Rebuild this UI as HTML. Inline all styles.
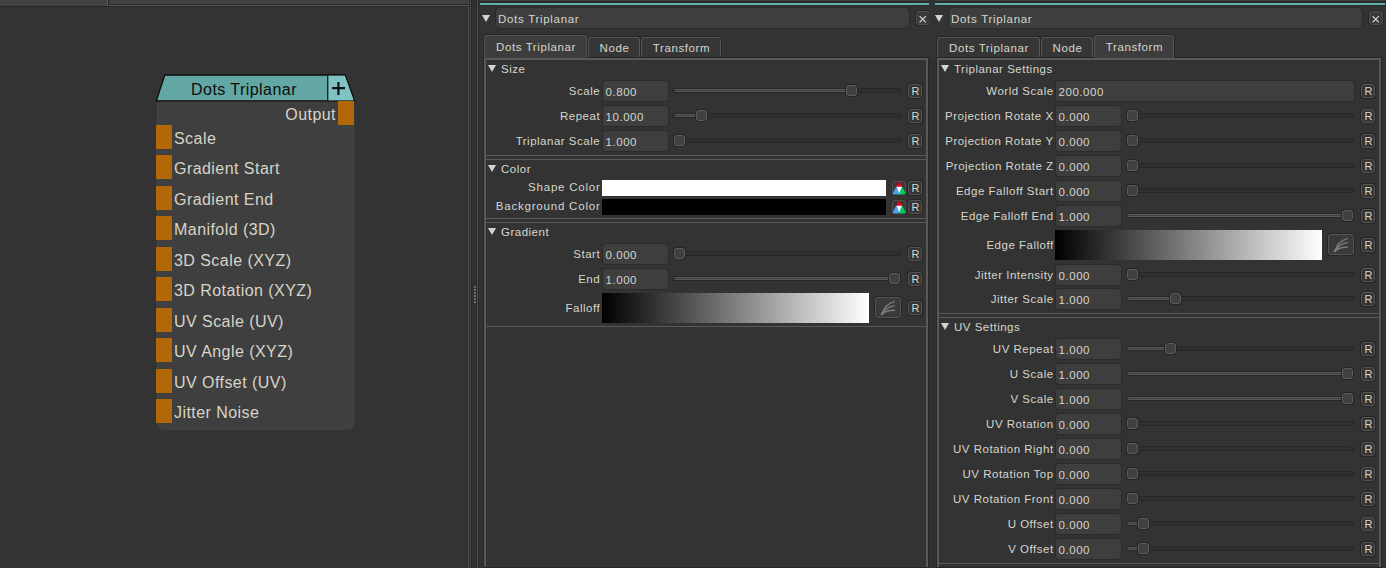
<!DOCTYPE html><html><head><meta charset="utf-8"><style>
*{margin:0;padding:0;box-sizing:border-box}
html,body{width:1386px;height:568px;overflow:hidden;background:#333333}
body{position:relative;font-family:"Liberation Sans",sans-serif}
body>div{position:absolute}
.t{position:absolute;font-size:11.5px;line-height:14px;color:#d6d6cc;white-space:nowrap;letter-spacing:0.5px}
.nt{position:absolute;font-size:16px;line-height:18px;white-space:nowrap;letter-spacing:0.45px}
.tri{width:0;height:0;border-left:4px solid transparent;border-right:4px solid transparent;border-top:7px solid #d4d4d4}
.tbox{background:#3e3e3e;border-radius:4px;box-shadow:0 0 0 1px #2a2a2a}
.xbtn{width:14px;height:14px;background:#3a3a3a;border:1px solid #4f4f4f;border-radius:3px;box-shadow:0 0 0 1px #262626}
.xbtn span{position:absolute;left:2px;top:0px;font-size:13px;line-height:14px;color:#d6d6cc}
.tab{background:#363636;border:1px solid #555555;border-bottom:none;border-radius:3px 3px 0 0;box-shadow:0 0 0 1px #262626}
.tab.act{background:#3d3d3d}
.inp{background:#3e3e3e;border-radius:3px;box-shadow:0 0 0 1px #2b2b2b}
.trk{background:#2f2f2f;border-radius:2px;box-shadow:0 0 0 1px #272727}
.trkf{background:#3d3d3d;border:1px solid #5a5a5a;border-radius:2px;box-shadow:0 0 0 1px #262626}
.hdl{background:#404040;border:1px solid #5c5c5c;border-radius:3px;box-shadow:0 0 0 1px #262626}
.rb{width:14px;height:14px;background:#353535;border:1px solid #555;border-radius:3px;box-shadow:0 0 0 1px #262626}
.rb span{position:absolute;left:2.5px;top:0.3px;font-size:11px;line-height:12px;color:#d6d6cc}
.fb{background:#3a3a3a;border:1px solid #555555;border-radius:3px;box-shadow:0 0 0 1px #262626}
.cb{width:14px;height:14px;background:#3a3a3a;border:1px solid #4f4f4f;border-radius:3px}
</style></head><body>
<div style="left:0px;top:0px;width:107px;height:6px;background:#424242;"></div>
<div style="left:107px;top:0px;width:1px;height:6px;background:#5a5a5a;"></div>
<div style="left:108px;top:0px;width:1px;height:5px;background:#262626;"></div>
<div style="left:109px;top:0px;width:360px;height:4px;background:#424242;"></div>
<div style="left:108px;top:4px;width:362px;height:1px;background:#262626;"></div>
<div style="left:109px;top:5px;width:360px;height:1px;background:#585858;"></div>
<div style="left:0px;top:6px;width:468px;height:1px;background:#272727;"></div>
<div style="left:468px;top:5px;width:1px;height:563px;background:#555555;"></div>
<div style="left:467px;top:6px;width:1px;height:562px;background:#2a2a2a;"></div>
<div style="left:469px;top:4px;width:1px;height:564px;background:#282828;"></div>
<div style="left:470px;top:0px;width:1px;height:568px;background:#4a4a4a;"></div>
<div style="left:471px;top:0px;width:1px;height:568px;background:#262626;"></div>
<div style="left:472px;top:0px;width:4px;height:568px;background:#313131;"></div>
<div style="left:476px;top:0px;width:1px;height:568px;background:#282828;"></div>
<div style="left:477px;top:0px;width:1px;height:568px;background:#505050;"></div>
<div style="left:478px;top:0px;width:1px;height:568px;background:#262626;"></div>
<div style="left:474px;top:286px;width:2px;height:2px;background:#6a6a6a;"></div>
<div style="left:474px;top:289px;width:2px;height:2px;background:#6a6a6a;"></div>
<div style="left:474px;top:292px;width:2px;height:2px;background:#6a6a6a;"></div>
<div style="left:474px;top:295px;width:2px;height:2px;background:#6a6a6a;"></div>
<div style="left:474px;top:298px;width:2px;height:2px;background:#6a6a6a;"></div>
<div style="left:474px;top:301px;width:2px;height:2px;background:#6a6a6a;"></div>
<svg style="position:absolute;left:0;top:0" width="470" height="568">
<rect x="157.5" y="100" width="196.5" height="329" rx="6" ry="6" fill="#3f3f3f" stroke="#474747" stroke-width="1"/>
<polygon points="164.8,75 345.2,75 354.5,100.8 156.3,100.8" fill="#63a7a4" stroke="#0d0d0d" stroke-width="1.3"/>
<polygon points="328,75.7 344.8,75.7 353.6,100.2 328,100.2" fill="#7fc4c2"/>
<rect x="327" y="75" width="1.4" height="26" fill="#1a2a2a"/>
<rect x="326" y="86" width="2" height="2" fill="none"/>
<rect x="332" y="87" width="13" height="2.2" fill="#111"/>
<rect x="337.3" y="82" width="2.2" height="13" fill="#111"/>
</svg>
<div class="nt" style="left:158px;top:81px;width:172px;text-align:center;color:#0c0c0c;">Dots Triplanar</div>
<div style="left:338px;top:101px;width:16px;height:24px;background:#b26709;"></div>
<div class="nt" style="left:200px;top:106px;width:136px;text-align:right;color:#d8d4c8;">Output</div>
<div style="left:156px;top:125px;width:16px;height:24px;background:#b26709;"></div>
<div class="nt" style="left:174px;top:130px;color:#d8d4c8;">Scale</div>
<div style="left:156px;top:155px;width:16px;height:24px;background:#b26709;"></div>
<div class="nt" style="left:174px;top:160px;color:#d8d4c8;">Gradient Start</div>
<div style="left:156px;top:186px;width:16px;height:24px;background:#b26709;"></div>
<div class="nt" style="left:174px;top:191px;color:#d8d4c8;">Gradient End</div>
<div style="left:156px;top:216px;width:16px;height:24px;background:#b26709;"></div>
<div class="nt" style="left:174px;top:221px;color:#d8d4c8;">Manifold (3D)</div>
<div style="left:156px;top:247px;width:16px;height:24px;background:#b26709;"></div>
<div class="nt" style="left:174px;top:252px;color:#d8d4c8;">3D Scale (XYZ)</div>
<div style="left:156px;top:277px;width:16px;height:24px;background:#b26709;"></div>
<div class="nt" style="left:174px;top:282px;color:#d8d4c8;">3D Rotation (XYZ)</div>
<div style="left:156px;top:308px;width:16px;height:24px;background:#b26709;"></div>
<div class="nt" style="left:174px;top:313px;color:#d8d4c8;">UV Scale (UV)</div>
<div style="left:156px;top:338px;width:16px;height:24px;background:#b26709;"></div>
<div class="nt" style="left:174px;top:343px;color:#d8d4c8;">UV Angle (XYZ)</div>
<div style="left:156px;top:369px;width:16px;height:24px;background:#b26709;"></div>
<div class="nt" style="left:174px;top:374px;color:#d8d4c8;">UV Offset (UV)</div>
<div style="left:156px;top:399px;width:16px;height:24px;background:#b26709;"></div>
<div class="nt" style="left:174px;top:404px;color:#d8d4c8;">Jitter Noise</div>
<div style="left:479px;top:0px;width:450px;height:1px;background:#404040;"></div>
<div style="left:479px;top:1px;width:450px;height:2px;background:#292929;"></div>
<div style="left:480px;top:3px;width:449px;height:2px;background:#64b0ac;"></div>
<div style="left:479px;top:5px;width:450px;height:1px;background:#2c2c2c;"></div>
<div style="left:479px;top:6px;width:450px;height:1px;background:#303030;"></div>
<div class="tri" style="left:482px;top:15px"></div>
<div class="tbox" style="left:496px;top:8px;width:413px;height:20px"></div>
<div class="t" style="left:498px;top:12px;letter-spacing:0.7px;">Dots Triplanar</div>
<div class="xbtn" style="left:916px;top:11px;"><svg width="14" height="14" style="position:absolute;left:-1px;top:-1px"><path d="M3.6 5.1 L9.8 11.3 M9.8 5.1 L3.6 11.3" stroke="#dcdcd4" stroke-width="1.15"/></svg></div>
<div style="left:929px;top:6px;width:6px;height:52px;background:#333333;"></div>
<div class="tab act" style="left:484px;top:35px;width:103px;height:24px"></div>
<div class="t" style="left:484.5px;top:40px;width:103px;text-align:center;letter-spacing:0.6px;">Dots Triplanar</div>
<div class="tab" style="left:588px;top:37px;width:52px;height:21px"></div>
<div class="t" style="left:588.5px;top:41px;width:52px;text-align:center;letter-spacing:0.6px;">Node</div>
<div class="tab" style="left:641px;top:37px;width:80px;height:21px"></div>
<div class="t" style="left:641.5px;top:41px;width:80px;text-align:center;letter-spacing:0.6px;">Transform</div>
<div style="left:587px;top:57px;width:342px;height:1px;background:#262626;"></div>
<div style="left:483px;top:57px;width:1px;height:511px;background:#262626;"></div>
<div style="left:484px;top:58px;width:444px;height:2px;background:#595959;"></div>
<div style="left:484px;top:58px;width:2px;height:510px;background:#595959;"></div>
<div style="left:926px;top:58px;width:2px;height:510px;background:#595959;"></div>
<div style="left:928px;top:57px;width:1px;height:511px;background:#282828;"></div>
<div style="left:486px;top:155px;width:440px;height:1px;background:#595959;"></div>
<div style="left:486px;top:159px;width:440px;height:1px;background:#595959;"></div>
<div style="left:486px;top:218px;width:440px;height:1px;background:#595959;"></div>
<div style="left:486px;top:222px;width:440px;height:1px;background:#595959;"></div>
<div style="left:486px;top:326px;width:440px;height:1px;background:#595959;"></div>
<div class="tri" style="left:488px;top:65px"></div>
<div class="t" style="left:501px;top:62px;">Size</div>
<div class="t" style="left:300.1px;top:84px;width:300px;text-align:right;">Scale</div>
<div class="inp" style="left:603px;top:81px;width:65px;height:20px"></div>
<div class="t" style="left:605.5px;top:85px;letter-spacing:0.55px;">0.800</div>
<div class="trk" style="left:674px;top:89px;width:226px;height:3px"></div>
<div class="trkf" style="left:674px;top:89px;width:174px;height:3px"></div>
<div class="hdl" style="left:846px;top:85px;width:11px;height:11px"></div>
<div class="rb" style="left:908px;top:84px;"><span>R</span></div>
<div class="t" style="left:300.1px;top:109px;width:300px;text-align:right;">Repeat</div>
<div class="inp" style="left:603px;top:106px;width:65px;height:20px"></div>
<div class="t" style="left:605.5px;top:110px;letter-spacing:0.55px;">10.000</div>
<div class="trk" style="left:674px;top:114px;width:226px;height:3px"></div>
<div class="trkf" style="left:674px;top:114px;width:24px;height:3px"></div>
<div class="hdl" style="left:696px;top:110px;width:11px;height:11px"></div>
<div class="rb" style="left:908px;top:109px;"><span>R</span></div>
<div class="t" style="left:300.1px;top:134px;width:300px;text-align:right;">Triplanar Scale</div>
<div class="inp" style="left:603px;top:131px;width:65px;height:20px"></div>
<div class="t" style="left:605.5px;top:135px;letter-spacing:0.55px;">1.000</div>
<div class="trk" style="left:674px;top:139px;width:226px;height:3px"></div>
<div class="hdl" style="left:674px;top:135px;width:11px;height:11px"></div>
<div class="rb" style="left:908px;top:134px;"><span>R</span></div>
<div class="tri" style="left:488px;top:165px"></div>
<div class="t" style="left:501px;top:162px;">Color</div>
<div class="t" style="left:300.6px;top:180px;width:300px;text-align:right;letter-spacing:0.78px;">Shape Color</div>
<div style="left:602px;top:180px;width:284px;height:16px;background:#ffffff;"></div>
<div class="t" style="left:300.6px;top:199px;width:300px;text-align:right;letter-spacing:0.8px;">Background Color</div>
<div style="left:602px;top:199px;width:284px;height:16px;background:#000000;"></div>
<div class="cb" style="left:892px;top:181px"><svg width="14" height="14" viewBox="0 0 14 14" style="position:absolute;left:-1px;top:-1px;overflow:visible"><g stroke-linejoin="round" stroke-width="1.6"><path d="M7.2 1.6 L9.6 5.9 L4.8 5.9Z" fill="#e2001c" stroke="#e2001c"/><path d="M4.6 6.6 L7.0 12.4 L1.6 12.4Z" fill="#4d9df2" stroke="#4d9df2"/><path d="M9.8 6.6 L12.8 12.4 L7.4 12.4Z" fill="#00d062" stroke="#00d062"/></g><path d="M4.6 5.8 L9.9 5.8 L7.2 12.2Z" fill="#ffffff"/></svg></div>
<div class="rb" style="left:908px;top:181px;"><span>R</span></div>
<div class="cb" style="left:892px;top:200px"><svg width="14" height="14" viewBox="0 0 14 14" style="position:absolute;left:-1px;top:-1px;overflow:visible"><g stroke-linejoin="round" stroke-width="1.6"><path d="M7.2 1.6 L9.6 5.9 L4.8 5.9Z" fill="#e2001c" stroke="#e2001c"/><path d="M4.6 6.6 L7.0 12.4 L1.6 12.4Z" fill="#4d9df2" stroke="#4d9df2"/><path d="M9.8 6.6 L12.8 12.4 L7.4 12.4Z" fill="#00d062" stroke="#00d062"/></g><path d="M4.6 5.8 L9.9 5.8 L7.2 12.2Z" fill="#ffffff"/></svg></div>
<div class="rb" style="left:908px;top:200px;"><span>R</span></div>
<div class="tri" style="left:488px;top:228px"></div>
<div class="t" style="left:501px;top:225px;">Gradient</div>
<div class="t" style="left:300.1px;top:247px;width:300px;text-align:right;">Start</div>
<div class="inp" style="left:603px;top:244px;width:65px;height:20px"></div>
<div class="t" style="left:605.5px;top:248px;letter-spacing:0.55px;">0.000</div>
<div class="trk" style="left:674px;top:252px;width:226px;height:3px"></div>
<div class="hdl" style="left:674px;top:248px;width:11px;height:11px"></div>
<div class="rb" style="left:908px;top:247px;"><span>R</span></div>
<div class="t" style="left:300.1px;top:272px;width:300px;text-align:right;">End</div>
<div class="inp" style="left:603px;top:269px;width:65px;height:20px"></div>
<div class="t" style="left:605.5px;top:273px;letter-spacing:0.55px;">1.000</div>
<div class="trk" style="left:674px;top:277px;width:226px;height:3px"></div>
<div class="trkf" style="left:674px;top:277px;width:217px;height:3px"></div>
<div class="hdl" style="left:889px;top:273px;width:11px;height:11px"></div>
<div class="rb" style="left:908px;top:272px;"><span>R</span></div>
<div class="t" style="left:300.1px;top:301px;width:300px;text-align:right;">Falloff</div>
<div style="left:602px;top:293px;width:267px;height:30px;background:linear-gradient(90deg,#000 0%,#fff 100%)"></div>
<div class="fb" style="left:875px;top:297px;width:26px;height:21px"><svg width="26" height="21" style="position:absolute;left:-1px;top:-1px">
<g stroke="#7c7c7c" fill="none" stroke-linecap="round">
<path d="M7 17 C 8.5 11.5, 13 6.5, 19.2 4.6" stroke-width="1.5"/>
<path d="M7.5 16.5 C 10 12, 14 9.5, 19.2 8.6" stroke-width="1.4"/>
<path d="M7.5 16.5 C 11 14, 15 13, 19.5 13.2" stroke-width="1.4"/>
<path d="M6.6 17.2 L 9.5 14.5" stroke-width="2.2"/>
</g></svg></div>
<div class="rb" style="left:908px;top:301px;"><span>R</span></div>
<div style="left:935px;top:0px;width:451px;height:1px;background:#404040;"></div>
<div style="left:935px;top:1px;width:451px;height:2px;background:#292929;"></div>
<div style="left:935px;top:3px;width:450px;height:2px;background:#64b0ac;"></div>
<div style="left:935px;top:5px;width:451px;height:1px;background:#2c2c2c;"></div>
<div style="left:935px;top:6px;width:451px;height:1px;background:#303030;"></div>
<div class="tri" style="left:935px;top:15px"></div>
<div class="tbox" style="left:949px;top:8px;width:413px;height:20px"></div>
<div class="t" style="left:951px;top:12px;letter-spacing:0.7px;">Dots Triplanar</div>
<div class="xbtn" style="left:1369px;top:11px;"><svg width="14" height="14" style="position:absolute;left:-1px;top:-1px"><path d="M3.6 5.1 L9.8 11.3 M9.8 5.1 L3.6 11.3" stroke="#dcdcd4" stroke-width="1.15"/></svg></div>
<div style="left:929px;top:58px;width:7px;height:510px;background:#303030;"></div>
<div style="left:936px;top:58px;width:1px;height:510px;background:#282828;"></div>
<div class="tab" style="left:937px;top:37px;width:103px;height:21px"></div>
<div class="t" style="left:937.5px;top:41px;width:103px;text-align:center;letter-spacing:0.6px;">Dots Triplanar</div>
<div class="tab" style="left:1041px;top:37px;width:52px;height:21px"></div>
<div class="t" style="left:1041.5px;top:41px;width:52px;text-align:center;letter-spacing:0.6px;">Node</div>
<div class="tab act" style="left:1094px;top:35px;width:80px;height:24px"></div>
<div class="t" style="left:1094.5px;top:40px;width:80px;text-align:center;letter-spacing:0.6px;">Transform</div>
<div style="left:936px;top:57px;width:158px;height:1px;background:#262626;"></div>
<div style="left:1174px;top:57px;width:208px;height:1px;background:#262626;"></div>
<div style="left:937px;top:58px;width:444px;height:2px;background:#595959;"></div>
<div style="left:937px;top:58px;width:2px;height:510px;background:#595959;"></div>
<div style="left:1379px;top:58px;width:2px;height:510px;background:#595959;"></div>
<div style="left:1381px;top:57px;width:1px;height:511px;background:#282828;"></div>
<div style="left:938px;top:313px;width:442px;height:1px;background:#595959;"></div>
<div style="left:938px;top:317px;width:442px;height:1px;background:#595959;"></div>
<div style="left:938px;top:563px;width:442px;height:1px;background:#595959;"></div>
<div style="left:483px;top:567px;width:446px;height:1px;background:#262626;"></div>
<div style="left:936px;top:567px;width:446px;height:1px;background:#262626;"></div>
<div class="tri" style="left:941px;top:65px"></div>
<div class="t" style="left:954px;top:62px;">Triplanar Settings</div>
<div class="t" style="left:753.6px;top:84px;width:300px;text-align:right;">World Scale</div>
<div class="inp" style="left:1056px;top:81px;width:298px;height:20px"></div>
<div class="t" style="left:1058.5px;top:85px;letter-spacing:0.55px;">200.000</div>
<div class="rb" style="left:1361px;top:84px;"><span>R</span></div>
<div class="t" style="left:753.6px;top:109px;width:300px;text-align:right;">Projection Rotate X</div>
<div class="inp" style="left:1056px;top:106px;width:65px;height:20px"></div>
<div class="t" style="left:1058.5px;top:110px;letter-spacing:0.55px;">0.000</div>
<div class="trk" style="left:1127px;top:114px;width:226px;height:3px"></div>
<div class="hdl" style="left:1127px;top:110px;width:11px;height:11px"></div>
<div class="rb" style="left:1361px;top:109px;"><span>R</span></div>
<div class="t" style="left:753.6px;top:134px;width:300px;text-align:right;">Projection Rotate Y</div>
<div class="inp" style="left:1056px;top:131px;width:65px;height:20px"></div>
<div class="t" style="left:1058.5px;top:135px;letter-spacing:0.55px;">0.000</div>
<div class="trk" style="left:1127px;top:139px;width:226px;height:3px"></div>
<div class="hdl" style="left:1127px;top:135px;width:11px;height:11px"></div>
<div class="rb" style="left:1361px;top:134px;"><span>R</span></div>
<div class="t" style="left:753.6px;top:159px;width:300px;text-align:right;">Projection Rotate Z</div>
<div class="inp" style="left:1056px;top:156px;width:65px;height:20px"></div>
<div class="t" style="left:1058.5px;top:160px;letter-spacing:0.55px;">0.000</div>
<div class="trk" style="left:1127px;top:164px;width:226px;height:3px"></div>
<div class="hdl" style="left:1127px;top:160px;width:11px;height:11px"></div>
<div class="rb" style="left:1361px;top:159px;"><span>R</span></div>
<div class="t" style="left:753.6px;top:184px;width:300px;text-align:right;">Edge Falloff Start</div>
<div class="inp" style="left:1056px;top:181px;width:65px;height:20px"></div>
<div class="t" style="left:1058.5px;top:185px;letter-spacing:0.55px;">0.000</div>
<div class="trk" style="left:1127px;top:189px;width:226px;height:3px"></div>
<div class="hdl" style="left:1127px;top:185px;width:11px;height:11px"></div>
<div class="rb" style="left:1361px;top:184px;"><span>R</span></div>
<div class="t" style="left:753.6px;top:209px;width:300px;text-align:right;">Edge Falloff End</div>
<div class="inp" style="left:1056px;top:206px;width:65px;height:20px"></div>
<div class="t" style="left:1058.5px;top:210px;letter-spacing:0.55px;">1.000</div>
<div class="trk" style="left:1127px;top:214px;width:226px;height:3px"></div>
<div class="trkf" style="left:1127px;top:214px;width:217px;height:3px"></div>
<div class="hdl" style="left:1342px;top:210px;width:11px;height:11px"></div>
<div class="rb" style="left:1361px;top:209px;"><span>R</span></div>
<div class="t" style="left:753.6px;top:238px;width:300px;text-align:right;">Edge Falloff</div>
<div style="left:1055px;top:230px;width:267px;height:30px;background:linear-gradient(90deg,#000 0%,#fff 100%)"></div>
<div class="fb" style="left:1328px;top:234px;width:26px;height:21px"><svg width="26" height="21" style="position:absolute;left:-1px;top:-1px">
<g stroke="#7c7c7c" fill="none" stroke-linecap="round">
<path d="M7 17 C 8.5 11.5, 13 6.5, 19.2 4.6" stroke-width="1.5"/>
<path d="M7.5 16.5 C 10 12, 14 9.5, 19.2 8.6" stroke-width="1.4"/>
<path d="M7.5 16.5 C 11 14, 15 13, 19.5 13.2" stroke-width="1.4"/>
<path d="M6.6 17.2 L 9.5 14.5" stroke-width="2.2"/>
</g></svg></div>
<div class="rb" style="left:1361px;top:238px;"><span>R</span></div>
<div class="t" style="left:753.6px;top:268px;width:300px;text-align:right;">Jitter Intensity</div>
<div class="inp" style="left:1056px;top:265px;width:65px;height:20px"></div>
<div class="t" style="left:1058.5px;top:269px;letter-spacing:0.55px;">0.000</div>
<div class="trk" style="left:1127px;top:273px;width:226px;height:3px"></div>
<div class="hdl" style="left:1127px;top:269px;width:11px;height:11px"></div>
<div class="rb" style="left:1361px;top:268px;"><span>R</span></div>
<div class="t" style="left:753.6px;top:292px;width:300px;text-align:right;">Jitter Scale</div>
<div class="inp" style="left:1056px;top:289px;width:65px;height:20px"></div>
<div class="t" style="left:1058.5px;top:293px;letter-spacing:0.55px;">1.000</div>
<div class="trk" style="left:1127px;top:297px;width:226px;height:3px"></div>
<div class="trkf" style="left:1127px;top:297px;width:45px;height:3px"></div>
<div class="hdl" style="left:1170px;top:293px;width:11px;height:11px"></div>
<div class="rb" style="left:1361px;top:292px;"><span>R</span></div>
<div class="tri" style="left:941px;top:323px"></div>
<div class="t" style="left:954px;top:320px;">UV Settings</div>
<div class="t" style="left:753.6px;top:342px;width:300px;text-align:right;">UV Repeat</div>
<div class="inp" style="left:1056px;top:339px;width:65px;height:20px"></div>
<div class="t" style="left:1058.5px;top:343px;letter-spacing:0.55px;">1.000</div>
<div class="trk" style="left:1127px;top:347px;width:226px;height:3px"></div>
<div class="trkf" style="left:1127px;top:347px;width:40px;height:3px"></div>
<div class="hdl" style="left:1165px;top:343px;width:11px;height:11px"></div>
<div class="rb" style="left:1361px;top:342px;"><span>R</span></div>
<div class="t" style="left:753.6px;top:367px;width:300px;text-align:right;">U Scale</div>
<div class="inp" style="left:1056px;top:364px;width:65px;height:20px"></div>
<div class="t" style="left:1058.5px;top:368px;letter-spacing:0.55px;">1.000</div>
<div class="trk" style="left:1127px;top:372px;width:226px;height:3px"></div>
<div class="trkf" style="left:1127px;top:372px;width:217px;height:3px"></div>
<div class="hdl" style="left:1342px;top:368px;width:11px;height:11px"></div>
<div class="rb" style="left:1361px;top:367px;"><span>R</span></div>
<div class="t" style="left:753.6px;top:392px;width:300px;text-align:right;">V Scale</div>
<div class="inp" style="left:1056px;top:389px;width:65px;height:20px"></div>
<div class="t" style="left:1058.5px;top:393px;letter-spacing:0.55px;">1.000</div>
<div class="trk" style="left:1127px;top:397px;width:226px;height:3px"></div>
<div class="trkf" style="left:1127px;top:397px;width:217px;height:3px"></div>
<div class="hdl" style="left:1342px;top:393px;width:11px;height:11px"></div>
<div class="rb" style="left:1361px;top:392px;"><span>R</span></div>
<div class="t" style="left:753.6px;top:417px;width:300px;text-align:right;">UV Rotation</div>
<div class="inp" style="left:1056px;top:414px;width:65px;height:20px"></div>
<div class="t" style="left:1058.5px;top:418px;letter-spacing:0.55px;">0.000</div>
<div class="trk" style="left:1127px;top:422px;width:226px;height:3px"></div>
<div class="hdl" style="left:1127px;top:418px;width:11px;height:11px"></div>
<div class="rb" style="left:1361px;top:417px;"><span>R</span></div>
<div class="t" style="left:753.6px;top:442px;width:300px;text-align:right;">UV Rotation Right</div>
<div class="inp" style="left:1056px;top:439px;width:65px;height:20px"></div>
<div class="t" style="left:1058.5px;top:443px;letter-spacing:0.55px;">0.000</div>
<div class="trk" style="left:1127px;top:447px;width:226px;height:3px"></div>
<div class="hdl" style="left:1127px;top:443px;width:11px;height:11px"></div>
<div class="rb" style="left:1361px;top:442px;"><span>R</span></div>
<div class="t" style="left:753.6px;top:467px;width:300px;text-align:right;">UV Rotation Top</div>
<div class="inp" style="left:1056px;top:464px;width:65px;height:20px"></div>
<div class="t" style="left:1058.5px;top:468px;letter-spacing:0.55px;">0.000</div>
<div class="trk" style="left:1127px;top:472px;width:226px;height:3px"></div>
<div class="hdl" style="left:1127px;top:468px;width:11px;height:11px"></div>
<div class="rb" style="left:1361px;top:467px;"><span>R</span></div>
<div class="t" style="left:753.6px;top:492px;width:300px;text-align:right;">UV Rotation Front</div>
<div class="inp" style="left:1056px;top:489px;width:65px;height:20px"></div>
<div class="t" style="left:1058.5px;top:493px;letter-spacing:0.55px;">0.000</div>
<div class="trk" style="left:1127px;top:497px;width:226px;height:3px"></div>
<div class="hdl" style="left:1127px;top:493px;width:11px;height:11px"></div>
<div class="rb" style="left:1361px;top:492px;"><span>R</span></div>
<div class="t" style="left:753.6px;top:517px;width:300px;text-align:right;">U Offset</div>
<div class="inp" style="left:1056px;top:514px;width:65px;height:20px"></div>
<div class="t" style="left:1058.5px;top:518px;letter-spacing:0.55px;">0.000</div>
<div class="trk" style="left:1127px;top:522px;width:226px;height:3px"></div>
<div class="trkf" style="left:1127px;top:522px;width:13px;height:3px"></div>
<div class="hdl" style="left:1138px;top:518px;width:11px;height:11px"></div>
<div class="rb" style="left:1361px;top:517px;"><span>R</span></div>
<div class="t" style="left:753.6px;top:542px;width:300px;text-align:right;">V Offset</div>
<div class="inp" style="left:1056px;top:539px;width:65px;height:20px"></div>
<div class="t" style="left:1058.5px;top:543px;letter-spacing:0.55px;">0.000</div>
<div class="trk" style="left:1127px;top:547px;width:226px;height:3px"></div>
<div class="trkf" style="left:1127px;top:547px;width:13px;height:3px"></div>
<div class="hdl" style="left:1138px;top:543px;width:11px;height:11px"></div>
<div class="rb" style="left:1361px;top:542px;"><span>R</span></div>
</body></html>
